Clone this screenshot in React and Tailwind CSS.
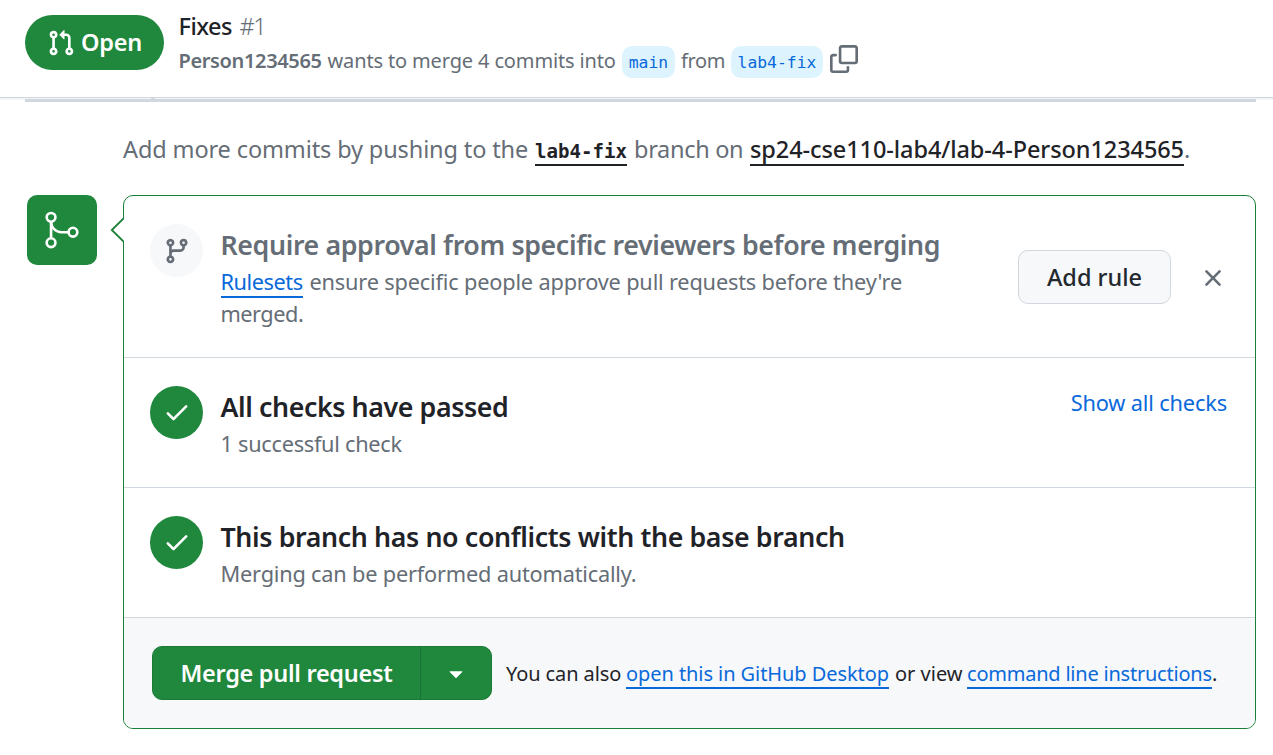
import { GoGitMerge } from 'react-icons/go';

const PATHS = {
  pull:
    'M1.5 3.25a2.25 2.25 0 1 1 3 2.122v5.256a2.251 2.251 0 1 1-1.5 0V5.372A2.25 2.25 0 0 1 1.5 3.25Zm5.677-.177L9.573.677A.25.25 0 0 1 10 .854V2.5h1A2.5 2.5 0 0 1 13.5 5v5.628a2.251 2.251 0 1 1-1.5 0V5a1 1 0 0 0-1-1h-1v1.646a.25.25 0 0 1-.427.177L7.177 3.427a.25.25 0 0 1 0-.354ZM3.75 2.5a.75.75 0 1 0 0 1.5.75.75 0 0 0 0-1.5Zm0 9.5a.75.75 0 1 0 0 1.5.75.75 0 0 0 0-1.5Zm8.25.75a.75.75 0 1 0 1.5 0 .75.75 0 0 0-1.5 0Z',
  copy:
    'M0 6.75C0 5.784.784 5 1.75 5h1.5a.75.75 0 0 1 0 1.5h-1.5a.25.25 0 0 0-.25.25v7.5c0 .138.112.25.25.25h7.5a.25.25 0 0 0 .25-.25v-1.5a.75.75 0 0 1 1.5 0v1.5A1.75 1.75 0 0 1 9.25 16h-7.5A1.75 1.75 0 0 1 0 14.25ZM5 1.75C5 .784 5.784 0 6.75 0h7.5C15.216 0 16 .784 16 1.75v7.5A1.75 1.75 0 0 1 14.25 11h-7.5A1.75 1.75 0 0 1 5 9.25Zm1.75-.25a.25.25 0 0 0-.25.25v7.5c0 .138.112.25.25.25h7.5a.25.25 0 0 0 .25-.25v-7.5a.25.25 0 0 0-.25-.25Z',
  branch:
    'M9.5 3.25a2.25 2.25 0 1 1 3 2.122V6A2.5 2.5 0 0 1 10 8.5H6a1 1 0 0 0-1 1v1.128a2.251 2.251 0 1 1-1.5 0V5.372a2.25 2.25 0 1 1 1.5 0v1.836A2.493 2.493 0 0 1 6 7h4a1 1 0 0 0 1-1v-.628A2.25 2.25 0 0 1 9.5 3.25Zm-6 0a.75.75 0 1 0 1.5 0 .75.75 0 0 0-1.5 0Zm8.25-.75a.75.75 0 1 0 0 1.5.75.75 0 0 0 0-1.5ZM4.25 12a.75.75 0 1 0 0 1.5.75.75 0 0 0 0-1.5Z',
  check:
    'M13.78 4.22a.75.75 0 0 1 0 1.06l-7.25 7.25a.75.75 0 0 1-1.06 0L2.22 9.28a.751.751 0 0 1 .018-1.042.751.751 0 0 1 1.042-.018L6 10.94l6.72-6.72a.75.75 0 0 1 1.06 0Z',
  x:
    'M3.72 3.72a.75.75 0 0 1 1.06 0L8 6.94l3.22-3.22a.749.749 0 0 1 1.275.326.749.749 0 0 1-.215.734L9.06 8l3.22 3.22a.749.749 0 0 1-.326 1.275.749.749 0 0 1-.734-.215L8 9.06l-3.22 3.22a.751.751 0 0 1-1.042-.018.751.751 0 0 1-.018-1.042L6.94 8 3.72 4.78a.75.75 0 0 1 0-1.06Z',
  triangle:
    'm4.427 7.427 3.396 3.396a.25.25 0 0 0 .354 0l3.396-3.396A.25.25 0 0 0 11.396 7H4.604a.25.25 0 0 0-.177.427Z',
};

function Icon({ name, className = '' }) {
  return (
    <svg viewBox="0 0 16 16" fill="currentColor" className={`size-7 shrink-0 ${className}`}>
      <path d={PATHS[name]} />
    </svg>
  );
}

function CheckCircle() {
  return (
    <div className="flex size-[53px] shrink-0 items-center justify-center rounded-full bg-[#1f883d] pb-[2px] text-white">
      <Icon name="check" />
    </div>
  );
}

function Header() {
  return (
    <header className="flex h-[98px] items-start border-b border-[#d0d7de] bg-white pl-[25px] pt-[15px] shadow-[0_2px_0_#f4f5f7]">
      <div className="flex h-[55px] w-[139px] items-center rounded-full bg-[#1f883d] pl-[22px] text-[23.5px] font-semibold text-white">
        <Icon name="pull" className="mt-px" />
        <span className="ml-[6px] mt-px tracking-[-0.2px]">Open</span>
      </div>
      <div className="ml-[14.5px] -mt-[6px]">
        <div className="flex h-[35px] items-center text-[23.5px]">
          <span className="w-[61px] font-medium tracking-[-0.5px] text-[#1f2328]">Fixes</span>
          <span className="font-light tracking-[-1.5px] text-[#656d76]">#1</span>
        </div>
        <div className="flex h-[34px] items-center text-[20px] text-[#656d76]">
          <span className="w-[149px] font-semibold tracking-[-0.36px]">Person1234565</span>
          <span className="w-[294.5px] tracking-[-0.14px]">wants to merge 4 commits into</span>
          <span className="mt-[2px] flex h-8 w-[53px] items-center justify-center rounded-[10px] bg-[#ddf4ff] pt-[2px] font-['DejaVu_Sans_Mono',monospace] text-[16.4px] text-[#0969da]">main</span>
          <span className="ml-[6px] w-[50px] tracking-[-0.4px]">from</span>
          <span className="mt-[2px] flex h-8 w-[92px] items-center justify-center rounded-[10px] bg-[#ddf4ff] pt-[2px] font-['DejaVu_Sans_Mono',monospace] text-[16.4px] text-[#0969da]">lab4-fix</span>
          <Icon name="copy" className="-mt-[5px] ml-[7px]" />
        </div>
      </div>
    </header>
  );
}

function StatusRow({ title, children, titleClass, textClass, action }) {
  return (
    <div className="flex h-[130px] items-start border-t border-[#d0d7de] pl-[26px] pr-7 pt-7">
      <CheckCircle />
      <div className="ml-[17.5px] grow">
        <div className={`h-[41px] text-[26.75px] font-semibold leading-[42px] text-[#1f2328] ${titleClass}`}>{title}</div>
        <div className={`text-[21.75px] leading-[34px] text-[#656d76] ${textClass}`}>{children}</div>
      </div>
      {action}
    </div>
  );
}

export default function App() {
  return (
    <div className="h-[755px] w-[1273px] overflow-hidden whitespace-nowrap bg-white font-['Noto_Sans','Open_Sans',sans-serif]">
      <Header />
      <div className="relative ml-[25px] w-[1231px]">
        <div className="ml-[126px] h-px w-1 bg-[#d0d7de]" />
        <div className="h-[3px] bg-[#d0d7de]" />
      </div>
      <p className="ml-[123px] mt-[28px] flex h-[40px] items-center text-[23.5px] text-[#656d76]">
        <span className="w-[412px] tracking-[-0.12px]">Add more commits by pushing to the</span>
        <span className="mt-[3px] flex h-[29px] w-[92px] items-center border-b-2 border-[#1f2328] pt-[4px] font-['DejaVu_Sans_Mono',monospace] text-[19.1px] font-bold text-[#1f2328]">lab4-fix</span>
        <span className="ml-[7px] w-[116px] tracking-[-0.3px]">branch on</span>
        <span className="mt-[2px] flex h-[30px] w-[434px] items-center border-b-2 border-[#1f2328] font-medium leading-none tracking-[-0.08px] text-[#1f2328]">sp24-cse110-lab4/lab-4-Person1234565</span>
        <span>.</span>
      </p>

      <div className="mt-[25px] flex pl-[27px]">
        <div className="flex size-[70px] items-center justify-center rounded-[10px] bg-[#1f883d] text-white">
          <GoGitMerge size={42} />
        </div>
        <div className="relative ml-[26px] h-[534px] w-[1133px] rounded-[10px] border border-[#1a7f37] bg-white">
          <svg className="absolute -left-[14px] top-[21px]" width="14" height="26" viewBox="0 0 14 26">
            <path d="M14.5 0.5 1.8 13l12.7 12.5" fill="#fff" stroke="#1a7f37" strokeWidth="1.8" />
          </svg>
          <div className="flex h-[161px] items-start pl-[26px] pt-7">
            <div className="flex size-[53px] shrink-0 items-center justify-center rounded-full bg-[#f6f8fa] text-[#656d76]">
              <Icon name="branch" />
            </div>
            <div className="ml-[17.5px] w-[797.5px] text-[21.75px] text-[#656d76]">
              <div className="h-[42px] text-[26.75px] font-semibold leading-[42px] tracking-[-0.37px]">Require approval from specific reviewers before merging</div>
              <div className="flex h-[32px] items-start">
                <span className="h-[32px] w-[82px] border-b-2 border-[#0969da] leading-[32px] tracking-[-0.46px] text-[#0969da]">Rulesets</span>
                <span className="ml-[7px] leading-[32px] tracking-[-0.18px]">ensure specific people approve pull requests before they're</span>
              </div>
              <div className="leading-[32px] tracking-[-0.5px]">merged.</div>
            </div>
            <button className="mt-[26px] h-[54px] w-[153px] rounded-[10px] border border-[#d0d7de] bg-[#f6f8fa] pt-[2px] text-[23.5px] font-medium text-[#24292f]">Add rule</button>
            <Icon name="x" className="ml-7 mt-10 text-[#656d76]" />
          </div>
          <StatusRow
            title="All checks have passed"
            titleClass="tracking-[-0.4px]"
            textClass="tracking-[-0.28px]"
            action={<a className="text-[21.75px] leading-[34px] tracking-[-0.15px] text-[#0969da]">Show all checks</a>}
          >
            1 successful check
          </StatusRow>
          <StatusRow title="This branch has no conflicts with the base branch" titleClass="tracking-[-0.37px]" textClass="tracking-[-0.2px]">
            Merging can be performed automatically.
          </StatusRow>
          <div className="flex h-[111px] items-center rounded-b-[9px] border-t border-[#d0d7de] bg-[#f6f8fa] pl-7 text-[20px] text-[#1f2328]">
            <div className="flex h-[54px] w-[340px] rounded-[10px] border border-[#1c7a37] bg-[#1f883d] text-white">
              <button className="w-[268px] border-r border-[#1a7036] pt-[2px] text-[23.5px] font-semibold tracking-[-0.3px]">Merge pull request</button>
              <button className="flex grow items-center justify-center">
                <Icon name="triangle" />
              </button>
            </div>
            <span className="ml-[14px] mt-[2px] w-[120px] tracking-[-0.1px]">You can also</span>
            <span className="mt-[1px] h-[30px] w-[263px] border-b-2 border-[#0969da] leading-[30px] tracking-[-0.07px] text-[#0969da]">open this in GitHub Desktop</span>
            <span className="ml-[6px] mt-[2px] w-[72px]">or view</span>
            <span className="mt-[1px] h-[30px] w-[245px] border-b-2 border-[#0969da] leading-[30px] tracking-[-0.22px] text-[#0969da]">command line instructions</span>
            <span className="mt-[2px]">.</span>
          </div>
        </div>
      </div>
    </div>
  );
}
